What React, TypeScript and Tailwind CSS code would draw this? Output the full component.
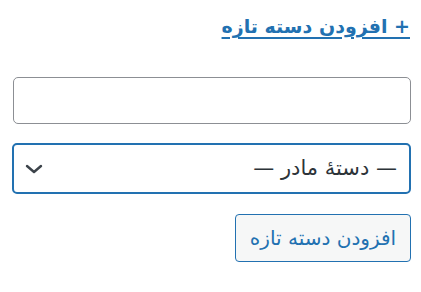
export default function App() {
  return (
    <div
      dir="rtl"
      className="w-[421px] h-[292px] bg-white pr-[10px] pl-[10px]"
      style={{ fontFamily: '"DejaVu Sans", sans-serif' }}
    >
      <div className="pt-[12px] pr-[1px]">
        <a
          href="#"
          className="text-[19px] font-bold text-[#2271b1] underline underline-offset-[4px] decoration-[2px] leading-[28px]"
        >
          + افزودن دسته تازه
        </a>
      </div>

      <div className="mt-[37px]">
        <input
          type="text"
          className="block w-[398px] h-[47px] rounded-[5px] border border-[#8c8f94] bg-white px-2 outline-none"
        />
      </div>

      <div className="mt-[19px]">
        <div className="relative w-[399px] h-[51px] rounded-[5px] border-2 border-[#2271b1] bg-white flex items-center pr-[12px]">
          <span className="text-[21px] text-[#2c3338]">— دستهٔ مادر —</span>
          <svg
            className="absolute left-[10px] top-[19px]"
            width="20"
            height="10"
            viewBox="0 0 20 10"
            fill="none"
          >
            <path d="M3 2 L10 8 L17 2" stroke="#3c434a" strokeWidth="2.4" strokeLinecap="round" strokeLinejoin="round" />
          </svg>
        </div>
      </div>

      <div className="mt-[20px]">
        <button className="w-[176px] h-[48px] rounded-[4px] border border-[#2271b1] bg-[#f6f7f7] text-[20px] text-[#2271b1]">
          افزودن دسته تازه
        </button>
      </div>
    </div>
  )
}
